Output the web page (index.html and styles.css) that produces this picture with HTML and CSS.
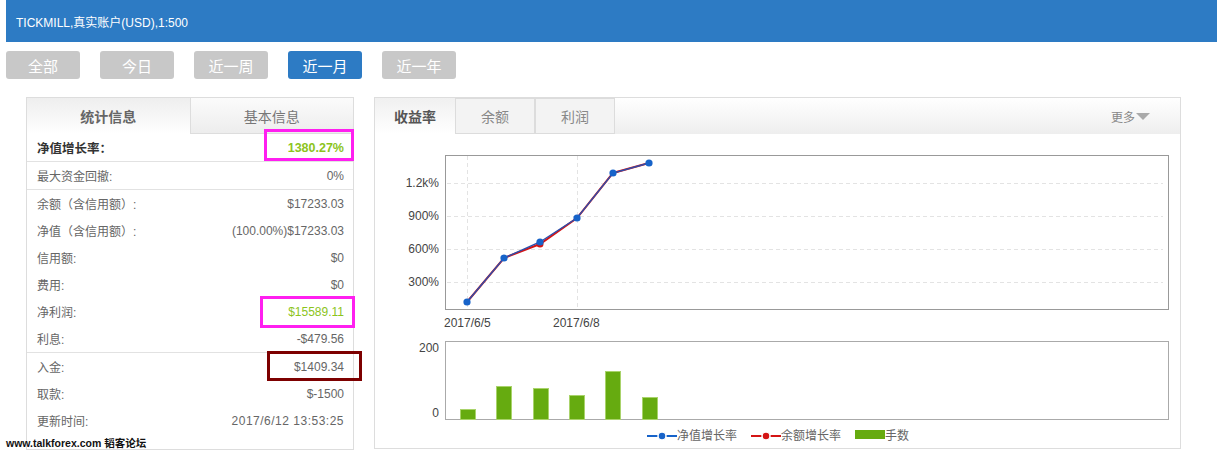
FILE: index.html
```html
<!DOCTYPE html>
<html lang="zh-CN">
<head>
<meta charset="utf-8">
<title>TICKMILL</title>
<link rel="stylesheet" href="styles.css">
</head>
<body>
<div class="page">
  <div class="header">TICKMILL,真实账户(USD),1:500</div>
  <div class="periods">
    <div class="btn">全部</div>
    <div class="btn">今日</div>
    <div class="btn">近一周</div>
    <div class="btn active">近一月</div>
    <div class="btn">近一年</div>
  </div>
  <div class="panels">
    <div class="stats">
      <div class="stats-tabs">
        <div class="stab active">统计信息</div>
        <div class="stab">基本信息</div>
      </div>
      <div class="row strong sep"><span>净值增长率：</span><span class="green bold">1380.27%</span></div>
      <div class="row sep"><span>最大资金回撤:</span><span>0%</span></div>
      <div class="row"><span>余额（含信用额）:</span><span>$17233.03</span></div>
      <div class="row"><span>净值（含信用额）:</span><span>(100.00%)$17233.03</span></div>
      <div class="row"><span>信用额:</span><span>$0</span></div>
      <div class="row"><span>费用:</span><span>$0</span></div>
      <div class="row"><span>净利润:</span><span class="green">$15589.11</span></div>
      <div class="row sep"><span>利息:</span><span>-$479.56</span></div>
      <div class="row"><span>入金:</span><span>$1409.34</span></div>
      <div class="row"><span>取款:</span><span>$-1500</span></div>
      <div class="row"><span>更新时间:</span><span class="wide">2017/6/12 13:53:25</span></div>
      <div class="mark mark-a"></div>
      <div class="mark mark-b"></div>
      <div class="mark mark-c"></div>
    </div>
    <div class="chart-panel">
      <div class="ctabs">
        <div class="ctab active">收益率</div>
        <div class="ctab">余额</div>
        <div class="ctab">利润</div>
        <div class="more">更多<span class="tri"></span></div>
      </div>
      <svg class="chart" width="805" height="314" viewBox="0 0 805 314" xmlns="http://www.w3.org/2000/svg">
        <g stroke="#e3e3e3" stroke-dasharray="4,3" stroke-width="1">
          <line x1="72" y1="49.5" x2="788" y2="49.5"/>
          <line x1="72" y1="82.5" x2="788" y2="82.5"/>
          <line x1="72" y1="115.5" x2="788" y2="115.5"/>
          <line x1="72" y1="148.5" x2="788" y2="148.5"/>
          <line x1="92.5" y1="22" x2="92.5" y2="175"/>
          <line x1="202.5" y1="22" x2="202.5" y2="175"/>
        </g>
        <rect x="70.5" y="21.5" width="723" height="154" fill="none" stroke="#999"/>
        <g class="axis" text-anchor="end">
          <text x="64" y="53">1.2k%</text>
          <text x="64" y="86">900%</text>
          <text x="64" y="119">600%</text>
          <text x="64" y="152">300%</text>
        </g>
        <g class="axis">
          <text x="69" y="193">2017/6/5</text>
          <text x="178" y="193">2017/6/8</text>
        </g>
        <polyline points="92,168 129,124 165,110 202,84 238,39 274,29" fill="none" stroke="#d41414" stroke-width="2"/>
        <g fill="#d41414">
          <circle cx="165" cy="110" r="3.5"/>
        </g>
        <polyline points="92,168 129,124 165,108 202,84 238,39 274,29" fill="none" stroke="#2a4fae" stroke-width="1.4"/>
        <g fill="#1763c9">
          <circle cx="92" cy="168" r="3.6"/>
          <circle cx="129" cy="124" r="3.6"/>
          <circle cx="165" cy="108" r="3.6"/>
          <circle cx="202" cy="84" r="3.6"/>
          <circle cx="238" cy="39" r="3.6"/>
          <circle cx="274" cy="29" r="3.6"/>
        </g>
        <rect x="70.5" y="207.5" width="723" height="78" fill="none" stroke="#aaa"/>
        <g class="axis" text-anchor="end">
          <text x="64" y="218">200</text>
          <text x="64" y="283">0</text>
        </g>
        <g fill="#66ab10" stroke="#a9d36b" stroke-width="1">
          <rect x="85.5" y="275.5" width="15" height="10"/>
          <rect x="121.5" y="252.5" width="15" height="33"/>
          <rect x="158.5" y="254.5" width="15" height="31"/>
          <rect x="194.5" y="261.5" width="15" height="24"/>
          <rect x="230.5" y="237.5" width="15" height="48"/>
          <rect x="267.5" y="263.5" width="15" height="22"/>
        </g>
        <g class="legend">
          <line x1="272" y1="302" x2="302" y2="302" stroke="#1763c9" stroke-width="2"/>
          <circle cx="287" cy="302" r="4" fill="#1763c9" stroke="#fff" stroke-width="1.5"/>
          <text x="302" y="306">净值增长率</text>
          <line x1="376" y1="302" x2="406" y2="302" stroke="#d41414" stroke-width="2"/>
          <circle cx="391" cy="302" r="4" fill="#d41414" stroke="#fff" stroke-width="1.5"/>
          <text x="406" y="306">余额增长率</text>
          <rect x="480" y="296" width="30" height="9" fill="#66ab10"/>
          <text x="510" y="306">手数</text>
        </g>
      </svg>
    </div>
  </div>
</div>
<div class="watermark">www.talkforex.com 韬客论坛</div>
</body>
</html>
```
FILE: styles.css
```css
body {
  margin: 0;
  background: #fff;
  font-family: "Liberation Sans", "Noto Sans CJK SC", sans-serif;
  color: #666;
}
.page {
  padding-left: 6px;
}
.header {
  height: 42px;
  background: #2d7bc4;
  color: #fff;
  font-size: 12px;
  padding-left: 10px;
  display: flex;
  align-items: center;
}
.periods {
  display: flex;
  gap: 20px;
  margin-top: 9px;
}
.btn {
  width: 74px;
  height: 28px;
  border-radius: 3px;
  background: #c8c8c8;
  color: #fff;
  font-size: 15px;
  display: flex;
  align-items: center;
  justify-content: center;
}
.btn.active {
  background: #2d7bc4;
}
.panels {
  display: flex;
  gap: 20px;
  margin-top: 18px;
  margin-left: 20px;
}
.stats {
  position: relative;
  width: 328px;
  height: 353px;
  border: 1px solid #ddd;
  box-sizing: border-box;
}
.stats-tabs {
  display: flex;
  height: 36px;
}
.stab {
  flex: 1;
  display: flex;
  align-items: center;
  justify-content: center;
  font-size: 14px;
  color: #777;
  box-sizing: border-box;
  background: linear-gradient(#fbfbfb, #ededed);
  border-left: 1px solid #ddd;
  border-bottom: 1px solid #ddd;
}
.stab.active {
  background: linear-gradient(#eeeeee, #ffffff);
  border: none;
  font-weight: bold;
  color: #666;
}
.row {
  height: 27px;
  display: flex;
  align-items: center;
  justify-content: space-between;
  padding: 0 9px 0 10px;
  font-size: 12px;
  color: #666;
}
.row.sep {
  border-bottom: 1px solid #e2e2e2;
}
.row.strong {
  font-weight: bold;
  color: #333;
  font-size: 12.5px;
}
.wide {
  letter-spacing: 0.5px;
}
.green {
  color: #8cc41c;
}
.bold {
  font-weight: bold;
}
.mark {
  position: absolute;
  box-sizing: border-box;
  border: 3px solid #ff1ff0;
}
.mark-a {
  left: 237px;
  top: 31px;
  width: 90px;
  height: 32px;
}
.mark-b {
  left: 233px;
  top: 198px;
  width: 95px;
  height: 32px;
}
.mark-c {
  left: 240px;
  top: 253px;
  width: 95px;
  height: 30px;
  border-color: #7d0000;
}
.chart-panel {
  width: 807px;
  height: 352px;
  border: 1px solid #ddd;
  box-sizing: border-box;
}
.ctabs {
  display: flex;
  height: 36px;
  background: linear-gradient(#ffffff, #eeeeee);
}
.ctab {
  width: 80px;
  box-sizing: border-box;
  display: flex;
  align-items: center;
  justify-content: center;
  font-size: 14px;
  color: #888;
  background: #f3f3f3;
  border: 1px solid #dcdcdc;
}
.ctab.active {
  background: linear-gradient(#f0f0f0, #ffffff);
  border: none;
  font-weight: bold;
  color: #555;
}
.more {
  margin-left: auto;
  margin-right: 30px;
  display: flex;
  align-items: center;
  font-size: 12px;
  color: #888;
}
.tri {
  width: 0;
  height: 0;
  margin-left: 1px;
  border-left: 7px solid transparent;
  border-right: 7px solid transparent;
  border-top: 7px solid #aaa;
}
.chart {
  display: block;
}
.axis text {
  font-family: "Liberation Sans", sans-serif;
  font-size: 12px;
  fill: #444;
}
.legend text {
  font-family: "Noto Sans CJK SC", sans-serif;
  font-size: 12px;
  fill: #666;
}
.watermark {
  position: absolute;
  left: 6px;
  top: 435px;
  font-size: 10.5px;
  font-weight: bold;
  color: #111;
}
```
